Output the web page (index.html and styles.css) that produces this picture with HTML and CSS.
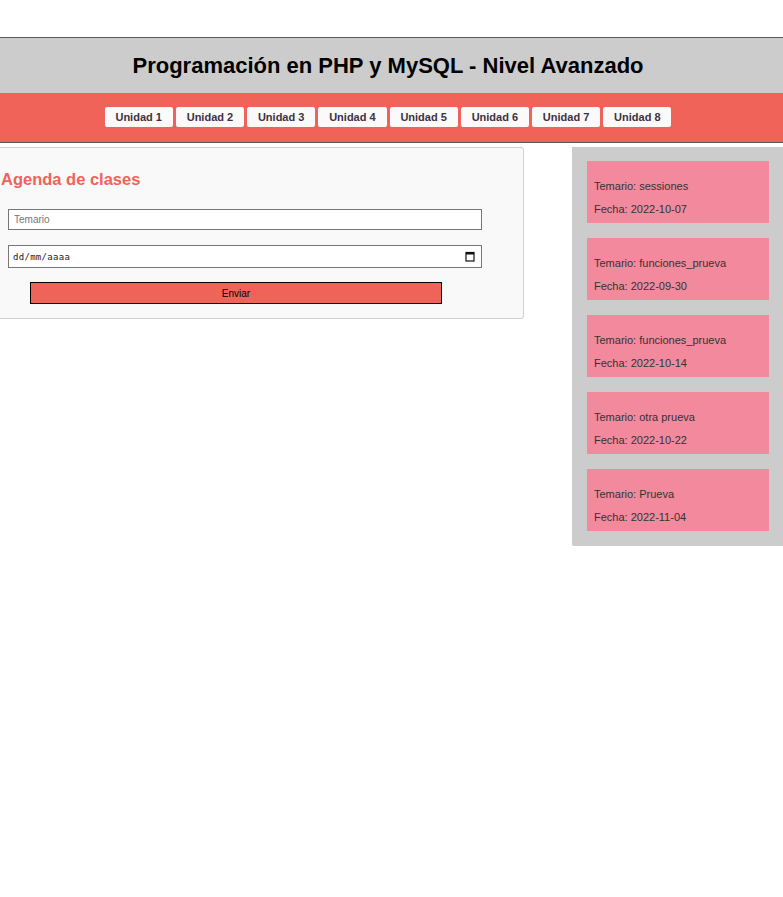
FILE: index.html
```html
<!DOCTYPE html>
<html lang="es">
<head>
<meta charset="utf-8">
<title>Programación en PHP y MySQL - Nivel Avanzado</title>
<link rel="stylesheet" href="styles.css">
</head>
<body>
<header class="site-header">
  <h1 class="site-title">Programación en PHP y MySQL - Nivel Avanzado</h1>
</header>
<nav class="units">
  <a class="unit" href="#">Unidad 1</a>
  <a class="unit" href="#">Unidad 2</a>
  <a class="unit" href="#">Unidad 3</a>
  <a class="unit" href="#">Unidad 4</a>
  <a class="unit" href="#">Unidad 5</a>
  <a class="unit" href="#">Unidad 6</a>
  <a class="unit" href="#">Unidad 7</a>
  <a class="unit" href="#">Unidad 8</a>
</nav>
<main class="main">
  <section class="agenda">
    <h2 class="agenda-title">Agenda de clases</h2>
    <form class="agenda-form">
      <input class="field" type="text" placeholder="Temario">
      <div class="date-wrap">
        <input class="field field-date" type="text" placeholder="dd/mm/aaaa">
        <svg class="cal-icon" width="10" height="11" viewBox="0 0 10 11" aria-hidden="true">
          <rect x="1" y="1.5" width="8" height="8.5" fill="none" stroke="#111" stroke-width="1.2"/>
          <rect x="1" y="1.5" width="8" height="2" fill="#111"/>
        </svg>
      </div>
      <button class="send" type="button">Enviar</button>
    </form>
  </section>
  <aside class="list">
    <div class="card"><p>Temario: sessiones</p><p>Fecha: 2022-10-07</p></div>
    <div class="card"><p>Temario: funciones_prueva</p><p>Fecha: 2022-09-30</p></div>
    <div class="card"><p>Temario: funciones_prueva</p><p>Fecha: 2022-10-14</p></div>
    <div class="card"><p>Temario: otra prueva</p><p>Fecha: 2022-10-22</p></div>
    <div class="card"><p>Temario: Prueva</p><p>Fecha: 2022-11-04</p></div>
  </aside>
</main>
</body>
</html>
```
FILE: styles.css
```css
* { box-sizing: border-box; }
body {
  margin: 0;
  padding-top: 37px;
  font-family: "Liberation Sans", Arial, sans-serif;
  background: #fff;
  color: #000;
}
.site-header {
  background: #cccccc;
  border-top: 1px solid #5a5a5a;
  height: 56px;
  display: flex;
  align-items: center;
  justify-content: center;
  padding-right: 7px;
}
.site-title {
  margin: 0;
  font-size: 22px;
  font-weight: bold;
  color: #000;
}
.units {
  background: #f06358;
  height: 50px;
  border-bottom: 1px solid #555;
  display: flex;
  justify-content: center;
  align-items: flex-start;
  gap: 3px;
  padding: 14px 7px 0 0;
}
.unit {
  display: block;
  background: #fafafa;
  color: #3a3340;
  text-decoration: none;
  font-size: 11px;
  font-weight: bold;
  height: 20px;
  line-height: 20px;
  padding: 0 10.9px;
  border-radius: 2px;
}
.main {
  display: flex;
  align-items: flex-start;
  justify-content: space-between;
  margin-top: 4px;
}
.agenda {
  width: 524px;
  height: 172px;
  background: #f9f9f9;
  border: 1px solid #d0d0d0;
  border-left: none;
  border-radius: 0 3px 3px 0;
}
.agenda-title {
  margin: 20px 0 0 1px;
  font-size: 16.5px;
  font-weight: bold;
  color: #f06358;
  line-height: 22px;
}
.agenda-form {
  display: flex;
  flex-direction: column;
  align-items: flex-start;
  margin-top: 19px;
}
.field {
  width: 474px;
  margin-left: 8px;
  height: 21px;
  border: 1px solid #767676;
  background: #fff;
  font-family: "Liberation Sans", Arial, sans-serif;
  font-size: 10px;
  padding: 0 5px;
  color: #333;
}
.field::placeholder { color: #757575; }
.date-wrap {
  position: relative;
  margin-top: 15px;
}
.field-date {
  height: 23px;
  font-family: "DejaVu Sans Mono", monospace;
  font-size: 9px;
  padding: 0 4px;
  letter-spacing: 0.3px;
}
.field-date::placeholder { color: #222; }
.cal-icon {
  position: absolute;
  right: 7px;
  top: 6px;
}
.send {
  margin: 14px 0 0 30px;
  width: 412px;
  height: 22px;
  background: #f06358;
  border: 1px solid #000;
  font-family: "Liberation Sans", Arial, sans-serif;
  font-size: 10px;
  color: #000;
  padding: 0;
}
.list {
  width: 211px;
  background: #cccccc;
  padding: 14px 14px 15px 15px;
  display: flex;
  flex-direction: column;
  gap: 15px;
  border-radius: 0 0 0 2px;
}
.card {
  background: #f3899d;
  height: 62px;
  padding: 18px 7px 0;
  display: flex;
  flex-direction: column;
  gap: 9px;
}
.card p {
  margin: 0;
  font-size: 11px;
  line-height: 14px;
  color: #333;
}
```
